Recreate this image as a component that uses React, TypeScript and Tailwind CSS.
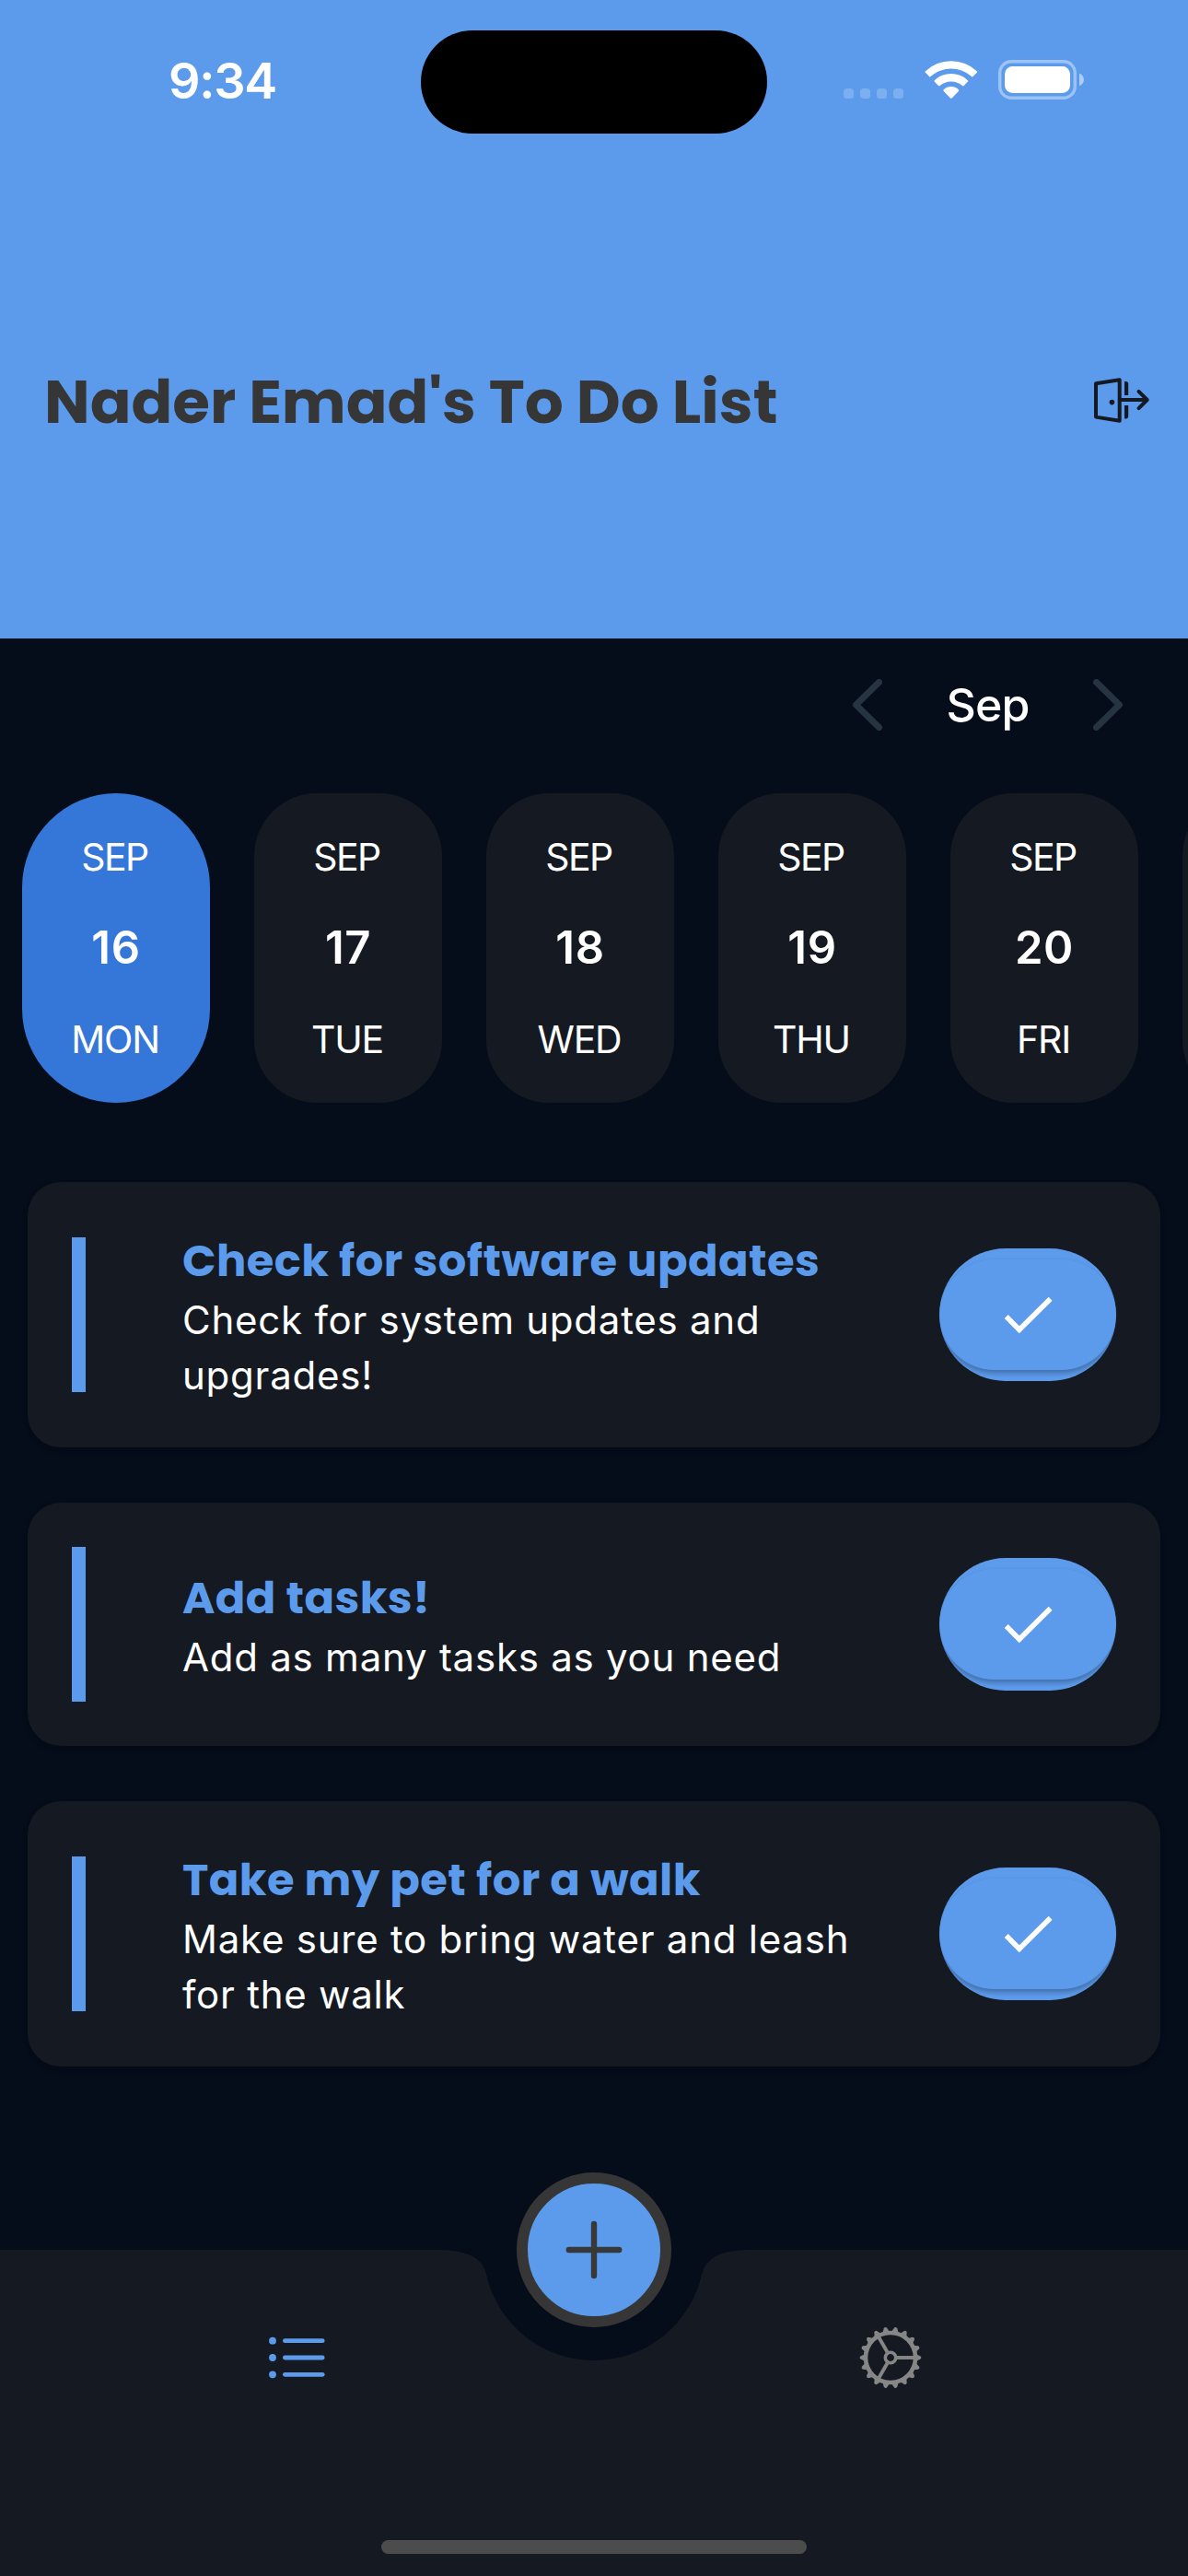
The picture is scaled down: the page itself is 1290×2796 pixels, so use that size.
const days = [
  { date: '16', day: 'MON', active: true },
  { date: '17', day: 'TUE' },
  { date: '18', day: 'WED' },
  { date: '19', day: 'THU' },
  { date: '20', day: 'FRI' },
];

const tasks = [
  { title: 'Check for software updates', lines: ['Check for system updates and', 'upgrades!'] },
  { title: 'Add tasks!', lines: ['Add as many tasks as you need'] },
  { title: 'Take my pet for a walk', lines: ['Make sure to bring water and leash', 'for the walk'] },
];

function WifiIcon() {
  return (
    <svg width="58" height="43" viewBox="0 0 58 43" fill="#fff">
      <path d="M0.9 12.2A41 41 0 0 1 56.7 12.2Q57.5 13 56.7 13.8L52.6 18Q51.8 18.8 51 18A33.5 33.5 0 0 0 6.6 18Q5.8 18.8 5 18L0.9 13.8Q0.1 13 0.9 12.2Z" />
      <path d="M10.8 22.2A26 26 0 0 1 46.8 22.2Q47.6 23 46.8 23.8L42.6 28Q41.8 28.8 41 28A18.5 18.5 0 0 0 16.6 28Q15.8 28.8 15 28L10.8 23.8Q10 23 10.8 22.2Z" />
      <path d="M20.7 32.2A12 12 0 0 1 36.9 32.2Q37.7 33 36.9 33.9L29.6 41.5Q28.8 42.3 28 41.5L20.7 33.9Q19.9 33 20.7 32.2Z" />
    </svg>
  );
}

function BatteryIcon() {
  return (
    <svg width="94" height="43" viewBox="0 0 94 43">
      <rect x="1.7" y="1.7" width="81.6" height="39.6" rx="12.5" fill="none" stroke="#fff" strokeOpacity="0.4" strokeWidth="3.4" />
      <rect x="7" y="7" width="71" height="29" rx="8.5" fill="#fff" />
      <path d="M88 14.8C94.6 17 94.6 26 88 28.2Z" fill="#fff" fillOpacity="0.5" />
    </svg>
  );
}

function ExitIcon() {
  return (
    <svg width="66" height="54" viewBox="0 0 66 54" fill="none" stroke="#151a22" strokeWidth="4" strokeLinejoin="round" strokeLinecap="round">
      <path d="M4 8.2L29.7 4.2V48.8L4 44.6Z" />
      <path d="M30 26H59.5M50.5 16.9L59.7 26L50.5 35.2" />
      <circle cx="21.4" cy="28.6" r="2.8" fill="#151a22" stroke="none" />
      <path d="M35 6H36.4Q39.2 6.2 39.2 9V21H35ZM35 32H39.2V43.4Q39.2 46.2 36.4 46.4H35Z" fill="#151a22" stroke="none" />
    </svg>
  );
}

function Chevron({ flip = false }: { flip?: boolean }) {
  return (
    <svg width="32" height="56" viewBox="0 0 32 56" fill="none" stroke="#263341" strokeWidth="7" strokeLinecap="round" strokeLinejoin="round">
      <path d={flip ? 'M3.5 3.5L28.5 28L3.5 52.5' : 'M28.5 3.5L3.5 28L28.5 52.5'} />
    </svg>
  );
}

function ListIcon() {
  return (
    <svg width="63" height="46" viewBox="0 0 63 46" fill="#5c9bec" stroke="#5c9bec" strokeLinecap="round">
      {[4.7, 23, 41.3].map((y) => (
        <g key={y}>
          <circle cx="5" cy={y} r="3.9" stroke="none" />
          <path d={`M18.4 ${y}H59.2`} strokeWidth="4.8" />
        </g>
      ))}
    </svg>
  );
}

function GearIcon() {
  const teeth = Array.from({ length: 18 }, (_, i) => i * 20);
  return (
    <svg width="69" height="68" viewBox="-34 -34 69 68" fill="none" stroke="#868686">
      <circle r="27" strokeWidth="4.6" />
      <circle r="5.7" strokeWidth="3.6" />
      {[0, 120, 240].map((a) => (
        <path key={a} d="M7 0H26" strokeWidth="3.9" transform={`rotate(${a})`} />
      ))}
      {teeth.map((a) => (
        <path key={a} d="M28 -3.8L32.6 -1.6Q34.2 0 32.6 1.6L28 3.8Z" fill="#868686" stroke="none" transform={`rotate(${a})`} />
      ))}
    </svg>
  );
}

function StatusBar() {
  return (
    <div className="relative h-[177px] w-full shrink-0">
      <div className="flex h-[177px] items-start justify-between pl-[183px] pr-[112px]">
        <span className="mt-[56px] text-[54px] font-semibold leading-[64px] tracking-[-1.3px] text-white">9:34</span>
        <div className="mt-[65px] flex h-[43px] items-start">
          <div className="mr-[22.5px] mt-[31px] flex gap-[7px]">
            {[0, 1, 2, 3].map((i) => (
              <span key={i} className="size-[11px] rounded-[3.5px] bg-white/20" />
            ))}
          </div>
          <WifiIcon />
          <div className="ml-[22.5px]">
            <BatteryIcon />
          </div>
        </div>
      </div>
      <div className="absolute left-[457px] top-[33px] h-[111.5px] w-[376px] rounded-full bg-black" />
    </div>
  );
}

function DoneButton() {
  return (
    <button className="flex h-[144px] w-[192px] shrink-0 items-center overflow-hidden rounded-full bg-[#5c9bec]">
      <span className="flex h-[120px] w-[192px] items-center justify-center rounded-full bg-[#5c9bec] shadow-[0_4px_5px_rgba(0,0,0,0.24),0_0_4px_rgba(0,0,0,0.06)]">
        <svg width="56" height="44" viewBox="0 0 56 44" fill="none" stroke="#fff" strokeWidth="5.6">
          <path d="M4.7 24L18.8 38.3L52.6 4.8" />
        </svg>
      </span>
    </button>
  );
}

export default function App() {
  return (
    <div className="relative flex h-[2796px] w-[1290px] flex-col overflow-hidden bg-[#050c1a] font-['Inter','Liberation_Sans',sans-serif]">
      <header className="flex h-[693px] shrink-0 flex-col bg-[#5c9bec]">
        <StatusBar />
        <div className="flex flex-1 items-center justify-between pl-[48px] pr-[38px]">
          <h1 className="whitespace-nowrap pt-[2px] font-['Poppins','Inter',sans-serif] text-[66px] font-bold leading-[96px] text-[#363636]">
            Nader Emad's To Do List
          </h1>
          <ExitIcon />
        </div>
      </header>

      <div className="flex h-[144px] shrink-0 items-center justify-end pr-[71px]">
        <Chevron />
        <span className="w-[229px] text-center text-[50px] font-medium leading-[60px] tracking-[-0.8px] text-white">Sep</span>
        <Chevron flip />
      </div>

      <div className="mt-[24px] flex h-[336px] shrink-0 gap-[48px] pl-[24px]">
        {days.map((d) => (
          <div
            key={d.date}
            className={
              'flex h-[336px] w-[204px] shrink-0 flex-col items-center justify-center text-white ' +
              (d.active ? 'rounded-full bg-[#3576d9]' : 'rounded-[68px] bg-[#151a22]')
            }
          >
            <span className="pr-[3px] text-[41px] leading-[98px] tracking-[-1.6px]">SEP</span>
            <span className="text-[49px] font-semibold leading-[99px] tracking-[0.6px]">{d.date}</span>
            <span className="pr-[2px] text-[41px] leading-[100px] tracking-[-1.2px]">{d.day}</span>
          </div>
        ))}
        <div className="h-[336px] w-[204px] shrink-0 rounded-[68px] bg-[#151a22]" />
      </div>

      <main className="mt-[86px] flex flex-col gap-[60px] px-[30px]">
        {tasks.map((t) => (
          <article
            key={t.title}
            className={
              'flex items-center rounded-[36px] bg-[#151a22] px-[48px] shadow-[0_3px_6px_rgba(0,0,0,0.18)] ' +
              (t.lines.length > 1 ? 'h-[288px]' : 'h-[264px]')
            }
          >
            <div className="mr-[105px] h-[168px] w-[15px] shrink-0 bg-[#5c9bec]" />
            <div className="flex flex-1 flex-col whitespace-nowrap">
              <h2 className="-mb-[2px] pt-[2px] font-['Poppins','Inter',sans-serif] text-[48px] font-bold leading-[72px] tracking-[0.45px] text-[#5c9bec]">
                {t.title}
              </h2>
              {t.lines.map((l) => (
                <p key={l} className="text-[42px] leading-[60px] tracking-[0.76px] text-white">
                  {l}
                </p>
              ))}
            </div>
            <DoneButton />
          </article>
        ))}
      </main>

      <nav className="absolute bottom-0 left-0 h-[354px] w-[1290px]">
        <svg className="absolute inset-0" width="1290" height="354" viewBox="0 0 1290 354" fill="#151a22">
          <path d="M0 0H477Q522 0 527.9 26.3A120 120 0 0 0 762.1 26.3Q768 0 813 0H1290V354H0Z" />
        </svg>
        <div className="relative grid h-[234px] grid-cols-2 place-items-center">
          <ListIcon />
          <GearIcon />
        </div>
        <button className="absolute left-[561px] top-[-84px] flex size-[168px] items-center justify-center rounded-full border-[12px] border-[#363636] bg-[#5c9bec]">
          <svg width="64" height="64" viewBox="0 0 64 64" fill="none" stroke="#363839" strokeWidth="6.4" strokeLinecap="round">
            <path d="M32 4V60M4.8 32H59.2" />
          </svg>
        </button>
        <div className="absolute bottom-[24px] left-[414px] h-[15px] w-[462px] rounded-full bg-[#4c4c4c]" />
      </nav>
    </div>
  );
}
